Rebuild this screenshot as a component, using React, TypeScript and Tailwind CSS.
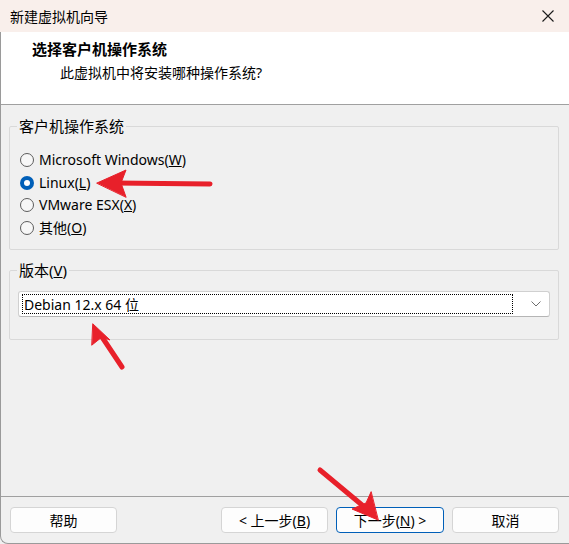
import React from "react";

const font = { fontFamily: '"Noto Sans", "Noto Sans CJK SC", sans-serif' };

const Radio = ({ checked, children }: { checked?: boolean; children: React.ReactNode }) => (
  <div className="flex h-[22.5px] items-center">
    {checked ? (
      <span className="flex h-[14px] w-[14px] items-center justify-center rounded-full bg-[#005fb8]">
        <span className="h-[6px] w-[6px] rounded-full bg-white" />
      </span>
    ) : (
      <span className="h-[14px] w-[14px] rounded-full border border-[#5c5c5c] bg-[#f7f7f7]" />
    )}
    <span className="ml-[5px] text-[14px] leading-none text-black">{children}</span>
  </div>
);

const Btn = ({ children, primary }: { children: React.ReactNode; primary?: boolean }) => (
  <button
    className={
      primary
        ? "flex h-[26px] w-[108px] items-center justify-center rounded-[4px] border border-[#005fb8] bg-[#fdfdfd] text-[14px] text-black"
        : "flex h-[26px] w-[107px] items-center justify-center rounded-[4px] border border-[#d5d5d5] bg-[#fdfdfd] text-[14px] text-black"
    }
  >
    {children}
  </button>
);

export default function App() {
  return (
    <div className="relative flex h-[544px] w-[569px] flex-col overflow-hidden bg-[#f0f0f0]" style={font}>
      {/* title bar */}
      <div className="flex h-[32px] shrink-0 items-center justify-between bg-[#f9efeb] pl-[10px] pr-[14px]">
        <span className="text-[14px] text-black">新建虚拟机向导</span>
        <svg width="14" height="14" viewBox="0 0 14 14">
          <path d="M1.5 1.5 L12.5 12.5 M12.5 1.5 L1.5 12.5" stroke="#1a1a1a" strokeWidth="1.1" />
        </svg>
      </div>

      <div className="flex flex-1 flex-col rounded-bl-[8px] border-b border-l border-[#9a9a9a]">
        {/* header */}
        <div className="flex h-[73px] shrink-0 flex-col border-b border-[#a0a0a0] bg-white pl-[31px] pt-[8px]">
          <span className="text-[15px] font-bold leading-[19px] text-black">选择客户机操作系统</span>
          <span className="mt-[5px] pl-[28px] text-[14px] leading-[18px] text-black">此虚拟机中将安装哪种操作系统?</span>
        </div>

        {/* body */}
        <div className="flex flex-1 flex-col pl-[8px] pr-[10px] pt-[13px]">
          <fieldset className="h-[132px] rounded-[2px] border border-[#d9d9d9] pl-[10px] pt-[15px]">
            <legend className="-ml-[3px] px-[2px] text-[15px] leading-[16px] text-black">客户机操作系统</legend>
            <Radio>
              Microsoft Windows(<u>W</u>)
            </Radio>
            <Radio checked>
              Linux(<u>L</u>)
            </Radio>
            <Radio>
              VMware ESX(<u>X</u>)
            </Radio>
            <Radio>
              其他(<u>O</u>)
            </Radio>
          </fieldset>

          <fieldset className="mt-[12px] h-[78px] rounded-[2px] border border-[#d9d9d9] px-[8px] pt-[13px]">
            <legend className="-ml-[1px] px-[2px] text-[15px] leading-[16px] text-black">
              版本(<u>V</u>)
            </legend>
            <div className="flex h-[26px] items-center rounded-[3px] border border-[#d0d0d0] border-b-[#b5b5b5] bg-white pl-[3px] pr-[8px]">
              <div className="flex h-[20px] flex-1 items-center border border-dotted border-black pl-[1px] text-[14px] text-black">
                Debian 12.x 64 位
              </div>
              <svg className="ml-[18px]" width="10" height="6" viewBox="0 0 10 6">
                <path d="M0.5 0.5 L5 5 L9.5 0.5" fill="none" stroke="#6e6e6e" strokeWidth="1" />
              </svg>
            </div>
          </fieldset>

          <div className="flex-1" />
        </div>

        {/* footer */}
        <div className="flex h-[47px] shrink-0 items-center border-t border-[#a0a0a0] pl-[9px] pr-[10px]">
          <Btn>帮助</Btn>
          <div className="flex-1" />
          <div className="flex gap-[8px]">
            <Btn>
              &lt; 上一步(<u>B</u>)
            </Btn>
            <Btn primary>
              下一步(<u>N</u>) &gt;
            </Btn>
            <Btn>取消</Btn>
          </div>
        </div>
      </div>

      {/* red annotation arrows */}
      <svg className="pointer-events-none absolute left-0 top-0" width="569" height="544">
        <g stroke="#e8202a" strokeWidth="5" strokeLinecap="round" fill="#e8202a">
          <line x1="210" y1="184" x2="115" y2="183" />
          <polygon points="97,183 126,170 121,183 126,197" strokeWidth="1" strokeLinejoin="round" />
          <line x1="122" y1="367" x2="102" y2="337" />
          <polygon points="93,324 110,340 102,337 92,345" strokeWidth="1" strokeLinejoin="round" />
          <line x1="320" y1="470" x2="362" y2="505" />
          <polygon points="378,520 352,509 366,503 371,492" strokeWidth="1" strokeLinejoin="round" />
        </g>
      </svg>
    </div>
  );
}
